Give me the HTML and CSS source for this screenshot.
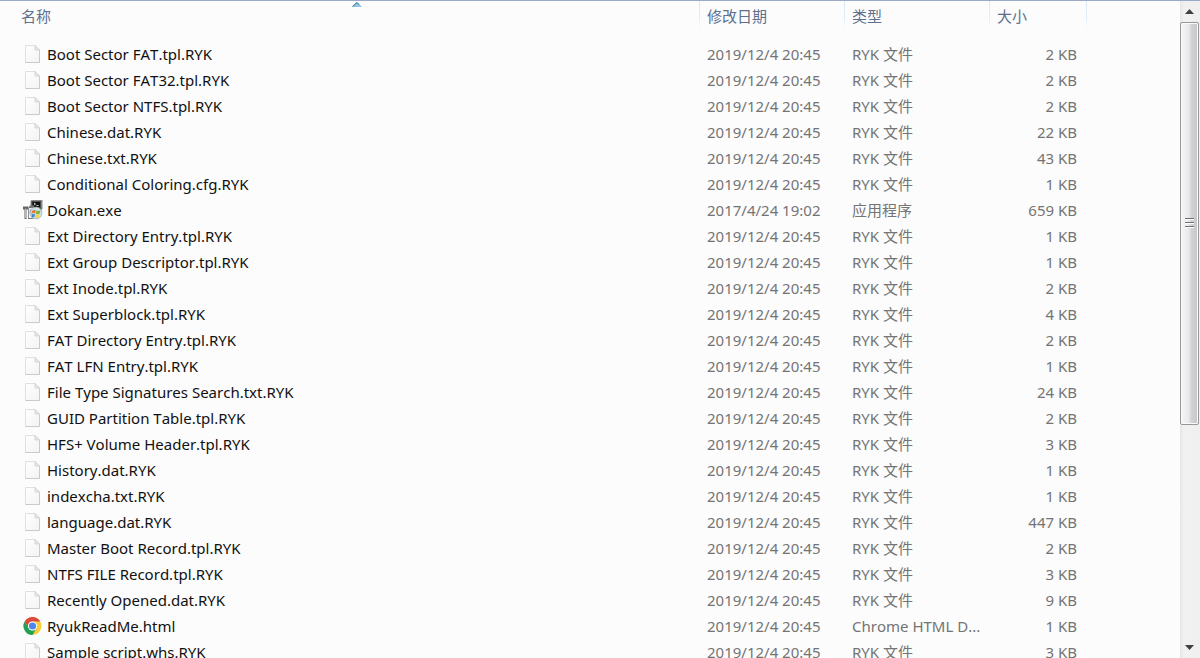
FILE: index.html
```html
<!DOCTYPE html>
<html lang="zh-CN">
<head>
    <meta charset="utf-8">
    <title>文件列表</title>
    <link rel="stylesheet" href="styles.css">
</head>
<body>
    <svg class="defs" aria-hidden="true">
        <defs>
            <linearGradient id="paper" x1="0" y1="0" x2="1" y2="1">
                <stop offset="0" stop-color="#ffffff"/>
                <stop offset="1" stop-color="#f3f3f3"/>
            </linearGradient>
            <symbol id="file" viewBox="0 0 20 20">
                <path d="M2.500 1.500h9.500l4.500 4.500v12.500h-14z" fill="url(#paper)" stroke="#e0e0e0"/>
                <path d="M2.500 18.500h14V6.500" fill="none" stroke="#cacaca"/>
                <path d="M12 1.500v4.500h4.500z" fill="#e8e8e8" stroke="#cbcbcb" stroke-width=".7"/>
            </symbol>
            <symbol id="app" viewBox="0 0 20 20">
                <path d="M7.500 1l1-1H19.500v9l-1.500 1.500H7.500z" fill="#8a8a8a"/>
                <path d="M8.500 1h9.500v8.500H8.500z" fill="#4b4b4b"/>
                <path d="M9.500 2h7.500v5h-7.500z" fill="#101010"/>
                <path d="M11 3l1.500 1-1.500 1M13.500 5.500h2" fill="none" stroke="#fff" stroke-width=".8"/>
                <path d="M0 6.500h5v3H3.500v9.500H1.500V9.500H0z" fill="#666"/>
                <path d="M2.300 8.500h.8v9.500h-.8z" fill="#ddd"/>
                <path d="M5 7.500l2-2h4v12l-1.500 1.500H5z" fill="#777"/>
                <path d="M5.800 8h4.200v10H5.800z" fill="#f2f2f2"/>
                <path d="M6.800 9.500h2v4h-2z" fill="#999"/>
                <circle cx="13" cy="13" r="6" fill="#cfe0e6" stroke="#8aa0a8" stroke-width=".6"/>
                <path d="M8.800 11.500c1.300-2 2.500-1.800 4-1.200l-.8 3.200c-1.400-.6-2.600-.5-3.700.3z" fill="#e8783a"/>
                <path d="M13.500 10.500c1.500.7 2.800.4 4-.5l-.9 3.700c-1.400.7-2.600.6-3.900 0z" fill="#79b83f"/>
                <path d="M8.500 14.500c1.200-.8 2.300-.7 3.400-.2l-.8 3.300c-1-.3-1.700-.3-2.200-.1z" fill="#3b8ad8"/>
                <path d="M12.500 14.500c1.300.6 2.500.6 3.900 0l-.6 2.800c-1.400.8-2.600.8-4 .3z" fill="#f3d341"/>
            </symbol>
            <symbol id="chrome" viewBox="0 0 20 20">
                <circle cx="9.500" cy="10" r="9" fill="#f9cd3a"/>
                <path d="M1.700 5.500A9 9 0 0 1 17.300 5.500H9.500A4.500 4.500 0 0 0 5.600 12.250z" fill="#dc4a3d"/>
                <path d="M1.700 5.500A9 9 0 0 0 9.500 19L13.400 12.250A4.500 4.500 0 0 1 5.600 12.250z" fill="#21a05a"/>
                <circle cx="9.500" cy="10" r="4.500" fill="#fff"/>
                <circle cx="9.500" cy="10" r="3.600" fill="#4c87ee"/>
            </symbol>
        </defs>
    </svg>

    <div class="explorer">
        <main class="list">
            <table class="files">
                <colgroup>
                    <col class="col-name">
                    <col class="col-date">
                    <col class="col-type">
                    <col class="col-size">
                    <col class="col-rest">
                </colgroup>
                <thead>
                    <tr>
                        <th aria-sort="ascending">
                            <button type="button">名称</button>
                            <svg class="sort" viewBox="0 0 10 5"><path d="M0 5L5 0l5 5z" fill="#8fc6e0"/><path d="M.5 4.500L5 .5l2 2" fill="none" stroke="#3d6c8a"/></svg>
                        </th>
                        <th><button type="button">修改日期</button></th>
                        <th><button type="button">类型</button></th>
                        <th><button type="button">大小</button></th>
                        <th></th>
                    </tr>
                </thead>
                <tbody>
                    <tr><td><svg class="icon"><use href="#file"/></svg>Boot Sector FAT.tpl.RYK</td><td>2019/12/4 20:45</td><td>RYK 文件</td><td>2 KB</td><td></td></tr>
                    <tr><td><svg class="icon"><use href="#file"/></svg>Boot Sector FAT32.tpl.RYK</td><td>2019/12/4 20:45</td><td>RYK 文件</td><td>2 KB</td><td></td></tr>
                    <tr><td><svg class="icon"><use href="#file"/></svg>Boot Sector NTFS.tpl.RYK</td><td>2019/12/4 20:45</td><td>RYK 文件</td><td>2 KB</td><td></td></tr>
                    <tr><td><svg class="icon"><use href="#file"/></svg>Chinese.dat.RYK</td><td>2019/12/4 20:45</td><td>RYK 文件</td><td>22 KB</td><td></td></tr>
                    <tr><td><svg class="icon"><use href="#file"/></svg>Chinese.txt.RYK</td><td>2019/12/4 20:45</td><td>RYK 文件</td><td>43 KB</td><td></td></tr>
                    <tr><td><svg class="icon"><use href="#file"/></svg>Conditional Coloring.cfg.RYK</td><td>2019/12/4 20:45</td><td>RYK 文件</td><td>1 KB</td><td></td></tr>
                    <tr><td><svg class="icon"><use href="#app"/></svg>Dokan.exe</td><td>2017/4/24 19:02</td><td>应用程序</td><td>659 KB</td><td></td></tr>
                    <tr><td><svg class="icon"><use href="#file"/></svg>Ext Directory Entry.tpl.RYK</td><td>2019/12/4 20:45</td><td>RYK 文件</td><td>1 KB</td><td></td></tr>
                    <tr><td><svg class="icon"><use href="#file"/></svg>Ext Group Descriptor.tpl.RYK</td><td>2019/12/4 20:45</td><td>RYK 文件</td><td>1 KB</td><td></td></tr>
                    <tr><td><svg class="icon"><use href="#file"/></svg>Ext Inode.tpl.RYK</td><td>2019/12/4 20:45</td><td>RYK 文件</td><td>2 KB</td><td></td></tr>
                    <tr><td><svg class="icon"><use href="#file"/></svg>Ext Superblock.tpl.RYK</td><td>2019/12/4 20:45</td><td>RYK 文件</td><td>4 KB</td><td></td></tr>
                    <tr><td><svg class="icon"><use href="#file"/></svg>FAT Directory Entry.tpl.RYK</td><td>2019/12/4 20:45</td><td>RYK 文件</td><td>2 KB</td><td></td></tr>
                    <tr><td><svg class="icon"><use href="#file"/></svg>FAT LFN Entry.tpl.RYK</td><td>2019/12/4 20:45</td><td>RYK 文件</td><td>1 KB</td><td></td></tr>
                    <tr><td><svg class="icon"><use href="#file"/></svg>File Type Signatures Search.txt.RYK</td><td>2019/12/4 20:45</td><td>RYK 文件</td><td>24 KB</td><td></td></tr>
                    <tr><td><svg class="icon"><use href="#file"/></svg>GUID Partition Table.tpl.RYK</td><td>2019/12/4 20:45</td><td>RYK 文件</td><td>2 KB</td><td></td></tr>
                    <tr><td><svg class="icon"><use href="#file"/></svg>HFS+ Volume Header.tpl.RYK</td><td>2019/12/4 20:45</td><td>RYK 文件</td><td>3 KB</td><td></td></tr>
                    <tr><td><svg class="icon"><use href="#file"/></svg>History.dat.RYK</td><td>2019/12/4 20:45</td><td>RYK 文件</td><td>1 KB</td><td></td></tr>
                    <tr><td><svg class="icon"><use href="#file"/></svg>indexcha.txt.RYK</td><td>2019/12/4 20:45</td><td>RYK 文件</td><td>1 KB</td><td></td></tr>
                    <tr><td><svg class="icon"><use href="#file"/></svg>language.dat.RYK</td><td>2019/12/4 20:45</td><td>RYK 文件</td><td>447 KB</td><td></td></tr>
                    <tr><td><svg class="icon"><use href="#file"/></svg>Master Boot Record.tpl.RYK</td><td>2019/12/4 20:45</td><td>RYK 文件</td><td>2 KB</td><td></td></tr>
                    <tr><td><svg class="icon"><use href="#file"/></svg>NTFS FILE Record.tpl.RYK</td><td>2019/12/4 20:45</td><td>RYK 文件</td><td>3 KB</td><td></td></tr>
                    <tr><td><svg class="icon"><use href="#file"/></svg>Recently Opened.dat.RYK</td><td>2019/12/4 20:45</td><td>RYK 文件</td><td>9 KB</td><td></td></tr>
                    <tr><td><svg class="icon"><use href="#chrome"/></svg>RyukReadMe.html</td><td>2019/12/4 20:45</td><td>Chrome HTML D...</td><td>1 KB</td><td></td></tr>
                    <tr><td><svg class="icon"><use href="#file"/></svg>Sample script.whs.RYK</td><td>2019/12/4 20:45</td><td>RYK 文件</td><td>3 KB</td><td></td></tr>
                </tbody>
            </table>
        </main>

        <div class="scrollbar">
            <button type="button" class="arrow" aria-label="向上滚动"><svg viewBox="0 0 9 5"><path d="M0 5L4.500 0 9 5z"/></svg></button>
            <div class="track">
                <div class="thumb">
                    <span class="grip"></span>
                    <span class="grip"></span>
                    <span class="grip"></span>
                </div>
            </div>
            <button type="button" class="arrow" aria-label="向下滚动"><svg viewBox="0 0 9 5"><path d="M0 0h9L4.500 5z"/></svg></button>
        </div>
    </div>
</body>
</html>
```
FILE: styles.css
```css
* { box-sizing: border-box; }

body {
    margin: 0;
    font-family: "Noto Sans", "Noto Sans CJK SC", sans-serif;
    font-size: 15px;
    font-kerning: none;
    line-height: 26px;
    color: #747474;
    background: #fcfcfc;
}

.defs {
    position: absolute;
    width: 0;
    height: 0;
}

.explorer {
    display: flex;
    height: 100vh;
    overflow: hidden;
    border-top: 1px solid #9aa9c6;
}

.list {
    flex: 1;
    min-width: 0;
    overflow: hidden;
}

/* file table */
.files {
    width: 100%;
    table-layout: fixed;
    border-collapse: separate;
    border-spacing: 0;
}

.col-date, .col-type { width: 145px; }
.col-size { width: 97px; }
.col-rest { width: 94px; }

th {
    position: relative;
    height: 40px;
    padding: 2px 0 0 8px;
    text-align: left;
    vertical-align: top;
    font-weight: normal;
    background: linear-gradient(#dbe8f6, #e3edf8 60%, #fcfcfc) left top / 1px 28px no-repeat;
}

th:first-child {
    padding-left: 21px;
    background: none;
}

th button {
    display: block;
    padding: 0;
    border: none;
    background: none;
    font: inherit;
    color: #5c6f8e;
}

.sort {
    position: absolute;
    top: 1px;
    left: 14px;
    right: 0;
    margin: 0 auto;
    width: 10px;
    height: 5px;
}

td {
    height: 26px;
    padding: 0 0 0 8px;
    overflow: hidden;
    white-space: nowrap;
}

td:first-child {
    padding-left: 23px;
    color: #111;
}

td:nth-child(4) {
    padding-right: 9px;
    text-align: right;
}

tbody tr:hover { background: #eef6fd; }

.icon {
    width: 20px;
    height: 20px;
    margin-right: 4px;
    vertical-align: -4px;
}

/* scrollbar */
.scrollbar {
    display: flex;
    flex-direction: column;
    width: 20px;
    padding-right: 1px;
    background: linear-gradient(90deg, #e6e6e6, #f1f1f1 20%, #efefef);
}

.arrow {
    display: flex;
    justify-content: center;
    align-items: center;
    height: 21px;
    padding: 0;
    border: none;
    background: none;
}

.arrow svg {
    width: 9px;
    height: 5px;
    fill: #404040;
}

.track { flex: 1; }

.thumb {
    display: flex;
    flex-direction: column;
    justify-content: center;
    align-items: center;
    gap: 2px;
    height: 65.5%;
    border: 1px solid #979797;
    border-radius: 2px;
    background: linear-gradient(90deg, #f6f6f6, #e9e9eb 45%, #d2d3d6 60%, #c4c5c9);
    box-shadow: inset 0 0 0 1px #fafafa;
}

.grip {
    width: 9px;
    height: 2px;
    border-bottom: 1px solid #fff;
    background: #6f6f6f;
}
```
